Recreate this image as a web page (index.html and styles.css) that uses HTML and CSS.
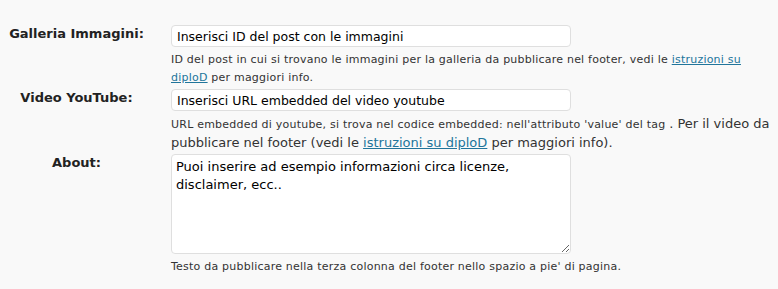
FILE: index.html
```html
<!DOCTYPE html>
<html lang="it">
<head>
    <meta charset="UTF-8">
    <title>Opzioni footer</title>
    <link rel="stylesheet" href="styles.css">
</head>
<body>
    <div class="form-table">
        <div class="row">
            <label class="row-label" for="gallery">Galleria Immagini:</label>
            <div class="field">
                <input type="text" id="gallery" class="text-input" value="Inserisci ID del post con le immagini">
                <p class="description">ID del post in cui si trovano le immagini per la galleria da pubblicare nel footer, vedi le <a href="#">istruzioni su diploD</a> per maggiori info.</p>
            </div>
        </div>
        <div class="row">
            <label class="row-label" for="video">Video YouTube:</label>
            <div class="field">
                <input type="text" id="video" class="text-input" value="Inserisci URL embedded del video youtube">
                <p class="description big"><span class="small">URL embedded di youtube, si trova nel codice embedded: nell'attributo 'value' del tag </span>. Per il video da pubblicare nel footer (vedi le <a href="#">istruzioni su diploD</a> per maggiori info).</p>
            </div>
        </div>
        <div class="row">
            <label class="row-label" for="about">About:</label>
            <div class="field">
                <textarea id="about" class="text-area">Puoi inserire ad esempio informazioni circa licenze, disclaimer, ecc..</textarea>
                <p class="description">Testo da pubblicare nella terza colonna del footer nello spazio a pie' di pagina.</p>
            </div>
        </div>
    </div>
</body>
</html>
```
FILE: styles.css
```css
body {
    margin: 0;
    padding: 0;
    background-color: #f9f9f9;
    color: #333;
    font-family: 'DejaVu Sans', Verdana, sans-serif;
    font-size: 13px;
}

.form-table {
    padding-top: 25px;
    width: 771px;
}

.row {
    display: grid;
    grid-template-columns: 153px 1fr;
    column-gap: 18px;
    margin-bottom: 2px;
}

.row-label {
    text-align: center;
    font-weight: bold;
    color: #222;
    line-height: 16px;
    padding-top: 1px;
}

.field {
    min-width: 0;
}

.text-input,
.text-area {
    display: block;
    box-sizing: border-box;
    width: 400px;
    margin: 0;
    border: 1px solid #dfdfdf;
    border-radius: 4px;
    background-color: #fff;
    color: #000;
    font-family: 'DejaVu Sans', Verdana, sans-serif;
    font-size: 13px;
}

.text-input {
    height: 22px;
    padding: 0 5px;
    font-size: 12.5px;
}

.text-area {
    height: 100px;
    padding: 3px 4px;
    line-height: 18px;
}

.description {
    margin: 4px 0 0;
    font-size: 11px;
    line-height: 18px;
    letter-spacing: 0.22px;
}

.description.big {
    font-size: 13px;
    letter-spacing: 0;
}

.description .small {
    font-size: 11px;
    letter-spacing: 0.22px;
}

.description a {
    color: #21759b;
}
```
